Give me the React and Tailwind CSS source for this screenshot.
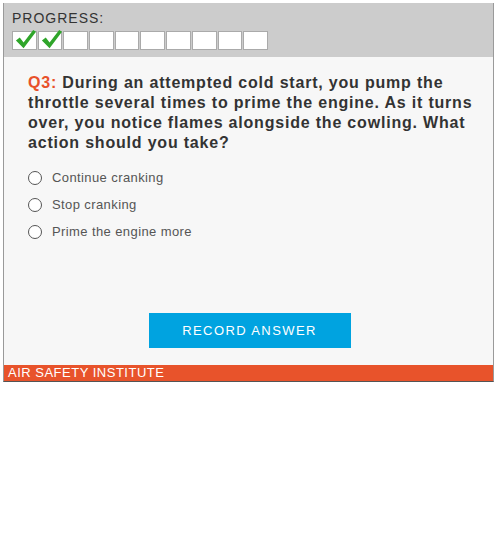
const boxes = [true, true, false, false, false, false, false, false, false, false]

const options = ["Continue cranking", "Stop cranking", "Prime the engine more"]

function Check() {
  return (
    <svg viewBox="0 0 24 24" className="absolute left-[0px] top-[-4px] w-[25px] h-[23px]">
      <path d="M2 13 L6 10 L10 15 L20 2 L23 4 L10 21 Z" fill="#2fa52a" />
    </svg>
  )
}

export default function App() {
  return (
    <div className="w-[500px] h-[534px] bg-white pt-[3px] pl-[3px]" style={{ fontFamily: '"Liberation Sans", Arial, sans-serif' }}>
      <div className="w-[491px] bg-[#f7f7f7] border-x border-[#9a9a9a] border-b border-b-[#555]">
        {/* Progress header */}
        <div className="bg-[#cccccc] h-[54px] pl-[8px] pt-[8px]">
          <p className="text-[14px] leading-[15px] text-[#333] tracking-[1px]">PROGRESS:</p>
          <div className="flex gap-[1px] mt-[5px]">
            {boxes.map((done, i) => (
              <div key={i} className="relative w-[24.7px] h-[19px] bg-white border border-[#aaa]">
                {done && <Check />}
              </div>
            ))}
          </div>
        </div>

        {/* Question */}
        <div className="pl-[24px] pr-[10px] pt-[16px]">
          <p className="text-[16px] leading-[20px] font-bold text-[#333] tracking-[0.8px] whitespace-nowrap">
            <span className="text-[#e8512a]">Q3: </span>
            During an attempted cold start, you pump the<br />
            throttle several times to prime the engine. As it turns<br />
            over, you notice flames alongside the cowling. What<br />
            action should you take?
          </p>

          <div className="mt-[17px] flex flex-col gap-[11px]">
            {options.map((o) => (
              <label key={o} className="flex items-center gap-[10px] text-[13px] leading-[16px] text-[#555] tracking-[0.4px]">
                <span className="w-[14px] h-[14px] rounded-full border border-[#555] bg-white" />
                {o}
              </label>
            ))}
          </div>
        </div>

        <div className="flex justify-center pt-[73px] pb-[17px]">
          <button className="w-[202px] h-[35px] bg-[#00a3e0] text-white text-[13px] tracking-[1.4px] ml-[2px]">
            RECORD ANSWER
          </button>
        </div>

        {/* Footer */}
        <div className="bg-[#e8532b] h-[16px] pl-[4px] text-white text-[13px] leading-[16px] tracking-[0.5px]">
          AIR SAFETY INSTITUTE
        </div>
      </div>
    </div>
  )
}
